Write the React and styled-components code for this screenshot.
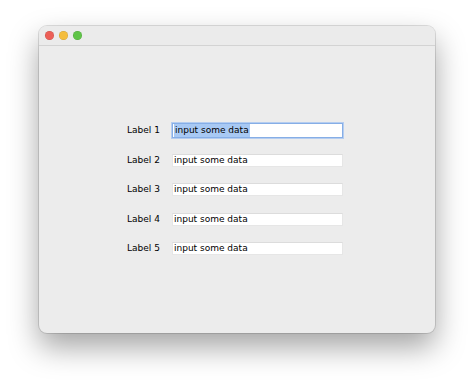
import React from "react";
import styled, { createGlobalStyle } from "styled-components";

const Global = createGlobalStyle`
  html, body { margin: 0; padding: 0; background: #ffffff; }
  body { font-family: "DejaVu Sans", "Liberation Sans", sans-serif; }
`;

const Page = styled.div`
  width: 474px;
  height: 385px;
  padding: 26px 0 0 39px;
  box-sizing: border-box;
`;

const Window = styled.div`
  width: 396px;
  height: 307px;
  border-radius: 8px;
  background: #ececec;
  box-shadow: 0 0 0 1px rgba(0, 0, 0, 0.12), 0 14px 30px rgba(0, 0, 0, 0.36);
  overflow: hidden;
  display: flex;
  flex-direction: column;
`;

const TitleBar = styled.div`
  height: 20px;
  flex: none;
  background: #ebebeb;
  border-bottom: 1px solid #d3d3d3;
  display: flex;
  align-items: center;
  gap: 5px;
  padding-left: 6px;
  box-sizing: border-box;
`;

const Light = styled.span`
  width: 9px;
  height: 9px;
  border-radius: 50%;
  background: ${(p) => p.$color};
  box-shadow: inset 0 0 0 0.5px rgba(0, 0, 0, 0.15);
`;

const Content = styled.div`
  flex: 1;
  padding: 78px 0 0 88px;
`;

const Form = styled.div`
  display: grid;
  grid-template-columns: 33px 171px;
  column-gap: 12px;
  row-gap: 16.5px;
  grid-auto-rows: 13px;
  align-items: center;
`;

const Label = styled.label`
  font-size: 9px;
  color: #000000;
  white-space: nowrap;
  line-height: 13px;
`;

const Field = styled.div`
  height: ${(p) => (p.$focused ? "13px" : "11px")};
  background: #ffffff;
  border: 1px solid ${(p) => (p.$focused ? "#86aee6" : "#e6e6e6")};
  border-top-color: ${(p) => (p.$focused ? "#86aee6" : "#dcdcdc")};
  box-shadow: ${(p) => (p.$focused ? "0 0 0 1px #b5cdf0" : "none")};
  font-size: 9px;
  line-height: ${(p) => (p.$focused ? "13px" : "11px")};
  color: #000000;
  padding-left: 1px;
  box-sizing: content-box;
  white-space: nowrap;
  overflow: hidden;
`;

const Selected = styled.span`
  background: #a8c9f4;
  padding: 0 1px;
  display: inline-block;
  height: 100%;
`;

const rows = [1, 2, 3, 4, 5];

export default function App() {
  return (
    <>
      <Global />
      <Page>
        <Window>
          <TitleBar>
            <Light $color="#ec5f57" />
            <Light $color="#f4bd3d" />
            <Light $color="#5fc447" />
          </TitleBar>
          <Content>
            <Form>
              {rows.map((n) => (
                <React.Fragment key={n}>
                  <Label>Label {n}</Label>
                  <Field $focused={n === 1}>
                    {n === 1 ? <Selected>input some data</Selected> : "input some data"}
                  </Field>
                </React.Fragment>
              ))}
            </Form>
          </Content>
        </Window>
      </Page>
    </>
  );
}
